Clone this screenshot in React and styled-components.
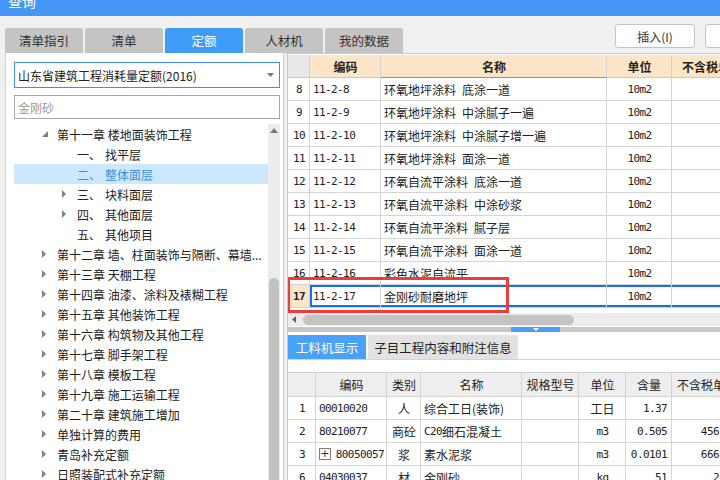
import React from "react";
import styled, { createGlobalStyle } from "styled-components";

const GlobalStyle = createGlobalStyle`
  html, body { margin: 0; padding: 0; background: #f0f0f0; }
  body {
    font-family: "Noto Sans CJK SC", "Noto Sans", sans-serif;
    font-size: 12px;
    color: #222;
  }
  #root { width: 720px; height: 480px; overflow: hidden; }
`;

const Window = styled.div`
  width: 720px;
  height: 480px;
  display: flex;
  flex-direction: column;
  overflow: hidden;
  background: #f0f0f0;
`;

const TitleBar = styled.div`
  height: 16px;
  flex: none;
  background: #4497f7;
  overflow: hidden;
  padding-left: 8px;
`;

const TitleText = styled.div`
  margin-top: -6px;
  color: #fff;
  font-size: 14px;
  line-height: 14px;
`;

const Toolbar = styled.div`
  height: 37px;
  flex: none;
  display: flex;
  align-items: flex-end;
  padding-left: 5px;
`;

const TabRow = styled.div`
  display: flex;
  gap: 2px;
`;

const Tab = styled.div`
  width: 78px;
  height: 25px;
  display: flex;
  align-items: center;
  justify-content: center;
  border-radius: 3px 3px 0 0;
  font-size: 12.5px;
  background: ${(p) => (p.$active ? "#3f9cf6" : "#c4c4c4")};
  color: ${(p) => (p.$active ? "#fff" : "#333")};
`;

const Actions = styled.div`
  flex: none;
  margin-left: auto;
  margin-right: -65px;
  align-self: flex-start;
  margin-top: 8px;
  display: flex;
  gap: 10px;
`;

const Button = styled.div`
  width: 80px;
  height: 24px;
  box-sizing: border-box;
  border: 1px solid #c4c4c4;
  border-radius: 3px;
  background: #fff;
  display: flex;
  align-items: center;
  justify-content: center;
  color: #333;
`;

const Body = styled.div`
  flex: 1;
  display: flex;
  min-height: 0;
`;

const LeftPanel = styled.div`
  margin-left: 5px;
  width: 279px;
  flex: none;
  box-sizing: border-box;
  background: #fff;
  border-left: 1px solid #d0d0d0;
  border-right: 1px solid #c8c8c8;
  padding: 9px 3px 0 8px;
  display: flex;
  flex-direction: column;
  overflow: hidden;
`;

const Select = styled.div`
  height: 26px;
  box-sizing: border-box;
  border: 1px solid #3f8ee8;
  display: flex;
  align-items: center;
  justify-content: space-between;
  padding: 0 5px 0 3px;
  color: #222;
`;

const Search = styled.div`
  margin-top: 7px;
  height: 24px;
  box-sizing: border-box;
  border: 1px solid #a8a8a8;
  display: flex;
  align-items: center;
  padding-left: 3px;
  color: #999;
`;

const Tree = styled.div`
  margin-top: 5px;
  flex: 1;
  display: flex;
  min-height: 0;
`;

const TreeList = styled.div`
  flex: 1;
  overflow: hidden;
  min-width: 0;
`;

const TreeRow = styled.div`
  height: 20px;
  display: flex;
  align-items: center;
  padding-left: ${(p) => p.$indent}px;
  background: ${(p) => (p.$selected ? "#cce8ff" : "transparent")};
  color: ${(p) => (p.$selected ? "#3b8fe3" : "#222")};
  white-space: nowrap;
  overflow: hidden;
`;

const Expander = styled.span`
  width: 15px;
  flex: none;
  display: flex;
  align-items: center;
`;

const Ordinal = styled.span`
  width: 28px;
  flex: none;
`;

const VScroll = styled.div`
  width: 12px;
  flex: none;
  background: #ececec;
  display: flex;
  flex-direction: column;
  align-items: center;
`;

const ScrollArrow = styled.div`
  height: 12px;
  display: flex;
  align-items: center;
  justify-content: center;
`;

const VThumb = styled.div`
  margin-top: ${(p) => p.$offset}px;
  width: 10px;
  flex: 1;
  background: #c2c2c2;
  border-radius: 5px 5px 0 0;
`;

const RightPanel = styled.div`
  flex: 1;
  min-width: 0;
  margin-left: 3px;
  border-left: 1px solid #c8c8c8;
  background: #fff;
  display: flex;
  flex-direction: column;
  overflow: hidden;
`;

const TopGrid = styled.div`
  position: relative;
  height: 260px;
  flex: none;
  box-sizing: border-box;
  border-top: 1px solid #c8c8c8;
  padding-top: 1px;
`;

const Row = styled.div`
  display: grid;
  grid-template-columns: ${(p) => p.$cols};
  height: ${(p) => p.$h || 23}px;
`;

const Cell = styled.div`
  box-sizing: border-box;
  border-right: 1px solid #d4d4d4;
  border-bottom: 1px solid ${(p) => p.$under || "#d4d4d4"};
  display: flex;
  align-items: center;
  justify-content: ${(p) =>
    p.$align === "center" ? "center" : p.$align === "right" ? "flex-end" : "flex-start"};
  padding: 0 ${(p) => (p.$align === "right" ? 4 : 2)}px 0 ${(p) => (p.$align === "right" ? 0 : 3)}px;
  overflow: hidden;
  white-space: nowrap;
  background: ${(p) => p.$bg || "transparent"};
  font-weight: ${(p) => (p.$bold ? 700 : 400)};
  color: #222;
  box-shadow: ${(p) =>
    p.$sel
      ? `inset 0 2px 0 #1a6fe8, inset 0 -2px 0 #1a6fe8${p.$selStart ? ", inset 2px 0 0 #1a6fe8" : ""}`
      : "none"};
`;

const Mono = styled.span`
  font-family: "DejaVu Sans Mono", "Liberation Mono", monospace;
  font-size: 11px;
  letter-spacing: -0.6px;
`;

const Highlight = styled.div`
  position: absolute;
  left: -1px;
  top: 223px;
  width: 222px;
  height: 36px;
  box-sizing: border-box;
  border: 3px solid #ee3b3b;
  pointer-events: none;
`;

const HScroll = styled.div`
  height: 13px;
  flex: none;
  background: #ececec;
  display: flex;
  align-items: center;
  padding-left: 4px;
`;

const HThumb = styled.div`
  margin-left: 7px;
  width: 271px;
  height: 10px;
  border-radius: 5px;
  background: #c3c3c3;
`;

const Splitter = styled.div`
  margin-top: 1px;
  height: 5px;
  flex: none;
  background: #c8c8c8;
  display: flex;
  padding-left: 223px;
`;

const Grip = styled.div`
  width: 49px;
  background: #4aa0f5;
  display: flex;
  justify-content: center;
  align-items: center;
`;

const BottomTabs = styled.div`
  margin-top: 3px;
  height: 25px;
  flex: none;
  box-sizing: border-box;
  display: flex;
  gap: 2px;
  border-bottom: 1px solid #d4d4d4;
`;

const SubTab = styled.div`
  width: ${(p) => p.$w}px;
  height: 24px;
  display: flex;
  align-items: center;
  justify-content: center;
  font-size: 12.5px;
  background: ${(p) => (p.$active ? "#4aa1f8" : "#e2e2e2")};
  color: ${(p) => (p.$active ? "#fff" : "#222")};
`;

const BottomGrid = styled.div`
  margin-top: 12px;
  border-top: 1px solid #d0d0d0;
`;

const PlusBox = styled.span`
  width: 10px;
  height: 10px;
  border: 1px solid #808080;
  display: inline-flex;
  align-items: center;
  justify-content: center;
  margin-right: 5px;
  font-family: "DejaVu Sans", sans-serif;
  font-size: 11px;
  line-height: 10px;
  color: #333;
`;

const Collapsed = () => (
  <svg width="5" height="8" viewBox="0 0 5 8">
    <polygon points="0,0 4,4 0,8" fill="#808080" />
  </svg>
);

const Expanded = () => (
  <svg width="7" height="7" viewBox="0 0 7 7">
    <polygon points="6,0 6,6 0,6" fill="#808080" />
  </svg>
);

const TOP_COLS = "22px 71px 226px 65px 80px";
const BOTTOM_COLS = "28px 71px 34px 101px 57px 47px 46px 70px";

const topRows = [
  [8, "11-2-8", "环氧地坪涂料\u2002底涂一道"],
  [9, "11-2-9", "环氧地坪涂料\u2002中涂腻子一遍"],
  [10, "11-2-10", "环氧地坪涂料\u2002中涂腻子增一遍"],
  [11, "11-2-11", "环氧地坪涂料\u2002面涂一道"],
  [12, "11-2-12", "环氧自流平涂料\u2002底涂一道"],
  [13, "11-2-13", "环氧自流平涂料\u2002中涂砂浆"],
  [14, "11-2-14", "环氧自流平涂料\u2002腻子层"],
  [15, "11-2-15", "环氧自流平涂料\u2002面涂一道"],
  [16, "11-2-16", "彩色水泥自流平"],
  [17, "11-2-17", "金刚砂耐磨地坪"],
];

const chapters = [
  "第十二章 墙、柱面装饰与隔断、幕墙...",
  "第十三章 天棚工程",
  "第十四章 油漆、涂料及裱糊工程",
  "第十五章 其他装饰工程",
  "第十六章 构筑物及其他工程",
  "第十七章 脚手架工程",
  "第十八章 模板工程",
  "第十九章 施工运输工程",
  "第二十章 建筑施工增加",
  "单独计算的费用",
  "青岛补充定额",
  "日照装配式补充定额",
];

const sections = [
  ["一、", "找平层", false],
  ["二、", "整体面层", false, true],
  ["三、", "块料面层", true],
  ["四、", "其他面层", true],
  ["五、", "其他项目", false],
];

const App = () => {
  return (
    <>
      <GlobalStyle />
      <Window>
        <TitleBar>
          <TitleText>查询</TitleText>
        </TitleBar>
        <Toolbar>
          <TabRow>
            <Tab>清单指引</Tab>
            <Tab>清单</Tab>
            <Tab $active>定额</Tab>
            <Tab>人材机</Tab>
            <Tab>我的数据</Tab>
          </TabRow>
          <Actions>
            <Button>插入(I)</Button>
            <Button>替换(R)</Button>
          </Actions>
        </Toolbar>

        <Body>
          <LeftPanel>
            <Select>
              <span>山东省建筑工程消耗量定额(2016)</span>
              <svg width="7" height="4" viewBox="0 0 7 4">
                <polygon points="0,0 7,0 3.5,4" fill="#777" />
              </svg>
            </Select>
            <Search>金刚砂</Search>
            <Tree>
              <TreeList>
                <TreeRow $indent={28}>
                  <Expander>
                    <Expanded />
                  </Expander>
                  第十一章 楼地面装饰工程
                </TreeRow>
                {sections.map(([ord, name, hasKids, sel]) => (
                  <TreeRow key={ord} $indent={48} $selected={sel}>
                    <Expander>{hasKids && <Collapsed />}</Expander>
                    <Ordinal>{ord}</Ordinal>
                    {name}
                  </TreeRow>
                ))}
                {chapters.map((c) => (
                  <TreeRow key={c} $indent={28}>
                    <Expander>
                      <Collapsed />
                    </Expander>
                    {c}
                  </TreeRow>
                ))}
              </TreeList>
              <VScroll>
                <ScrollArrow>
                  <svg width="8" height="5" viewBox="0 0 8 5">
                    <polygon points="0,5 8,5 4,0" fill="#7a7a7a" />
                  </svg>
                </ScrollArrow>
                <VThumb $offset={142} />
              </VScroll>
            </Tree>
          </LeftPanel>

          <RightPanel>
            <TopGrid>
              <Row $cols={TOP_COLS}>
                <Cell $bg="#e8e8e8" $under="#c8c8c8" />
                <Cell $bg="#fde6c8" $bold $align="center" $under="#c8c8c8">编码</Cell>
                <Cell $bg="#fde6c8" $bold $align="center" $under="#5a9be6">名称</Cell>
                <Cell $bg="#fde6c8" $bold $align="center" $under="#c8c8c8">单位</Cell>
                <Cell $bg="#fde6c8" $bold $align="center" $under="#c8c8c8">不含税单价</Cell>
              </Row>
              {topRows.map(([n, code, name]) => {
                const sel = n === 17;
                return (
                  <Row key={n} $cols={TOP_COLS}>
                    <Cell $align="center" $bg={sel ? "#fde6c8" : undefined} $bold={sel}>
                      <Mono>{n}</Mono>
                    </Cell>
                    <Cell $sel={sel} $selStart>
                      <Mono>{code}</Mono>
                    </Cell>
                    <Cell $sel={sel}>{name}</Cell>
                    <Cell $sel={sel} $align="center">
                      <Mono>10m2</Mono>
                    </Cell>
                    <Cell $sel={sel} />
                  </Row>
                );
              })}
              <Highlight />
            </TopGrid>
            <HScroll>
              <svg width="4" height="7" viewBox="0 0 4 7">
                <polygon points="4,0 4,7 0,3.5" fill="#666" />
              </svg>
              <HThumb />
            </HScroll>
            <Splitter>
              <Grip>
                <svg width="6" height="3" viewBox="0 0 6 3">
                  <polygon points="0,0 6,0 3,3" fill="#fff" />
                </svg>
              </Grip>
            </Splitter>
            <BottomTabs>
              <SubTab $w={78} $active>工料机显示</SubTab>
              <SubTab $w={150}>子目工程内容和附注信息</SubTab>
            </BottomTabs>
            <BottomGrid>
              <Row $cols={BOTTOM_COLS} $h={24}>
                <Cell $bg="#eeeeee" />
                <Cell $bg="#eeeeee" $align="center">编码</Cell>
                <Cell $bg="#eeeeee" $align="center">类别</Cell>
                <Cell $bg="#eeeeee" $align="center">名称</Cell>
                <Cell $bg="#eeeeee" $align="center">规格型号</Cell>
                <Cell $bg="#eeeeee" $align="center">单位</Cell>
                <Cell $bg="#eeeeee" $align="center">含量</Cell>
                <Cell $bg="#eeeeee" $align="center">不含税单价</Cell>
              </Row>
              <Row $cols={BOTTOM_COLS}>
                <Cell $align="center"><Mono>1</Mono></Cell>
                <Cell><Mono>00010020</Mono></Cell>
                <Cell $align="center">人</Cell>
                <Cell>综合工日(装饰)</Cell>
                <Cell />
                <Cell $align="center">工日</Cell>
                <Cell $align="right"><Mono>1.37</Mono></Cell>
                <Cell $align="right" />
              </Row>
              <Row $cols={BOTTOM_COLS}>
                <Cell $align="center"><Mono>2</Mono></Cell>
                <Cell><Mono>80210077</Mono></Cell>
                <Cell $align="center">商砼</Cell>
                <Cell><Mono>C20</Mono>细石混凝土</Cell>
                <Cell />
                <Cell $align="center"><Mono>m3</Mono></Cell>
                <Cell $align="right"><Mono>0.505</Mono></Cell>
                <Cell $align="right"><Mono>456.31</Mono></Cell>
              </Row>
              <Row $cols={BOTTOM_COLS}>
                <Cell $align="center"><Mono>3</Mono></Cell>
                <Cell>
                  <PlusBox>+</PlusBox>
                  <Mono>80050057</Mono>
                </Cell>
                <Cell $align="center">浆</Cell>
                <Cell>素水泥浆</Cell>
                <Cell />
                <Cell $align="center"><Mono>m3</Mono></Cell>
                <Cell $align="right"><Mono>0.0101</Mono></Cell>
                <Cell $align="right"><Mono>666.67</Mono></Cell>
              </Row>
              <Row $cols={BOTTOM_COLS}>
                <Cell $align="center"><Mono>6</Mono></Cell>
                <Cell><Mono>04030037</Mono></Cell>
                <Cell $align="center">材</Cell>
                <Cell>金刚砂</Cell>
                <Cell />
                <Cell $align="center"><Mono>kg</Mono></Cell>
                <Cell $align="right"><Mono>51</Mono></Cell>
                <Cell $align="right"><Mono>2.43</Mono></Cell>
              </Row>
            </BottomGrid>
          </RightPanel>
        </Body>
      </Window>
    </>
  );
};

export default App;
